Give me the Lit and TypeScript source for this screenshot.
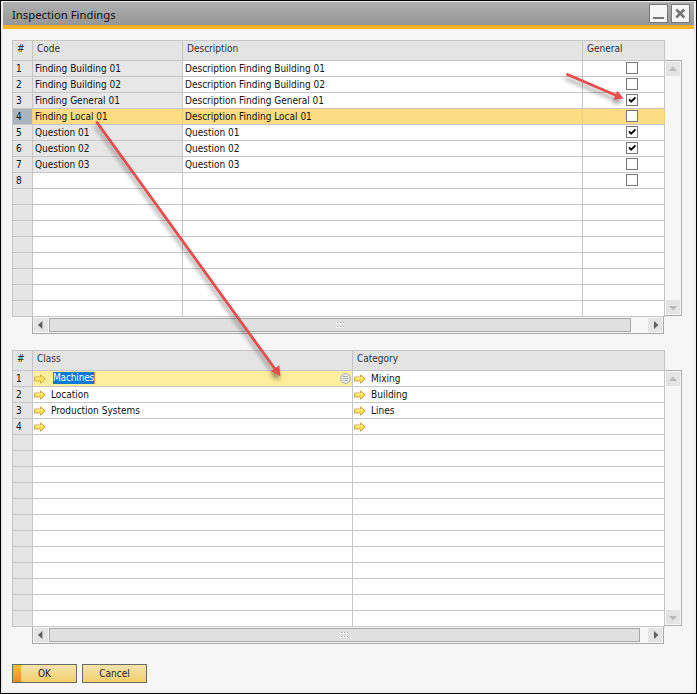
import { LitElement, html, svg, css, nothing } from "lit";
import { customElement, property } from "lit/decorators.js";
import { classMap } from "lit/directives/class-map.js";

interface Finding { code: string; description: string; general?: boolean; }
interface Assignment { cls: string; category: string; }

const FINDINGS: Finding[] = [
  { code: "Finding Building 01", description: "Description Finding Building 01", general: false },
  { code: "Finding Building 02", description: "Description Finding Building 02", general: false },
  { code: "Finding General 01", description: "Description Finding General 01", general: true },
  { code: "Finding Local 01", description: "Description Finding Local 01", general: false },
  { code: "Question 01", description: "Question 01", general: true },
  { code: "Question 02", description: "Question 02", general: true },
  { code: "Question 03", description: "Question 03", general: false },
  { code: "", description: "", general: false },
];
const ASSIGNMENTS: Assignment[] = [
  { cls: "Machines", category: "Mixing" },
  { cls: "Location", category: "Building" },
  { cls: "Production Systems", category: "Lines" },
  { cls: "", category: "" },
];
const ROWS = 16;
const rows = Array.from({ length: ROWS }, (_, i) => i);

@customElement("scroll-bar")
class ScrollBar extends LitElement {
  @property() direction = "vertical";
  static styles = css`
    :host { display: flex; box-sizing: border-box; background: #f7f7f7; }
    :host([direction="vertical"]) {
      flex-direction: column; justify-content: space-between;
      width: 17px; height: 256px; padding: 1px;
      border: 1px solid #adadad; border-left: 0;
    }
    :host([direction="horizontal"]) {
      width: 632px; height: 17px; margin-left: 20px; padding: 1px 1px;
      border: 1px solid #a9a9a9; border-top: 0; align-items: flex-start;
    }
    .btn { width: 14px; height: 14px; flex: none; background: #e4e4e4; }
    .btn svg { display: block; }
    .thumb {
      flex: none; box-sizing: border-box; width: var(--thumb, 582px); height: 14px; margin-left: 1px;
      border: 1px solid #a6a6a6; background: #e0e0e0;
      display: flex; align-items: center; justify-content: center;
    }
    .last { margin-left: auto; }
    .light { fill: #b9b9b9; }
    .dark { fill: #5e5e5e; }
  `;
  render() {
    if (this.direction === "vertical") {
      return html`
        <div class="btn"><svg width="14" height="14"><path class="light" d="M3 9 L7 4.5 L11 9z" /></svg></div>
        <div class="btn"><svg width="14" height="14"><path class="light" d="M3 6 L7 10.5 L11 6z" /></svg></div>`;
    }
    return html`
      <div class="btn"><svg width="14" height="14"><path class="dark" d="M8.4 3 L4 7 L8.4 11z" /></svg></div>
      <div class="thumb">
        <svg width="9" height="6">
          ${[0, 3, 6].map((x) => [0, 4].map((y) => svg`
            <rect x=${x} y=${y} width="2" height="2" fill="#fafafa" />
            <rect x=${x + 1} y=${y} width="1" height="1" fill="#a8a8a8" />`))}
        </svg>
      </div>
      <div class="btn last"><svg width="14" height="14"><path class="dark" d="M6 3 L10.4 7 L6 11z" /></svg></div>`;
  }
}

@customElement("app-root")
class AppRoot extends LitElement {
  static styles = css`
    :host {
      display: block; position: relative; box-sizing: border-box; width: 697px; height: 694px;
      border: 1px solid #000; background: #f6f6f6; overflow: hidden;
      font: 10px/14px "DejaVu Sans Condensed", "DejaVu Sans", sans-serif; font-stretch: condensed;
      color: #111; white-space: nowrap;
    }
    .frame {
      box-sizing: border-box; height: 692px; border: solid #ededed; border-width: 1px 2px 2px 2px;
    }
    .title {
      box-sizing: border-box; height: 27px; padding: 0 4px 0 9px; display: flex; align-items: flex-start;
      background: linear-gradient(#b0b0b0, #969696 23px); border-bottom: 4px solid #f5b324;
    }
    .title h1 {
      margin: 0; flex: 1; font: 11.3px/26px "Noto Sans", sans-serif; color: #111;
    }
    .win { display: flex; gap: 3px; padding-top: 2px; }
    .win svg { display: block; }
    .content { padding: 11px 9px 0; }
    .block { display: flex; align-items: flex-end; width: 670px; }
    .second { margin-top: 16px; }
    .vbar { margin-bottom: 1px; }
    .grid {
      width: 653px; box-sizing: border-box; border: 1px solid #c6c6c6; border-width: 1px 0 0 1px;
    }
    .row { display: grid; height: 16px; background: #fff; }
    .findings .row { grid-template-columns: 20px 150px 400px 82px; }
    .assign .row { grid-template-columns: 20px 320px 312px; }
    .row.head { height: 20px; }
    .cell {
      box-sizing: border-box; border: 1px solid #c6c6c6; border-width: 0 1px 1px 0;
      padding-left: 2px; display: flex; align-items: center; min-width: 0;
    }
    .cell.num { background: #e5e5e5; padding-left: 3px; }
    .head .cell { background: #e4e4e4; padding: 0 0 3px 4px; color: #333; }
    .cell.locked { background: #e7e7e7; }
    .selected .cell { background: #fcdc82; border-right-color: #eccf7f; }
    .selected .cell.num { background: #a9b4bf; }
    .cell.check { padding-left: 43px; }
    .cell.link { padding-left: 1px; gap: 5px; }
    .cell.active { background: #ffee9e; padding-right: 1px; }
    .cell svg { display: block; flex: none; }
    .mark {
      height: 12px; line-height: 12px; margin: -2px auto 0 2px; letter-spacing: -.15px;
      background: #0078d7; color: #fff; border-right: 1px solid #d88b4c;
    }
    .box {
      box-sizing: border-box; width: 12px; height: 12px; flex: none; margin-top: -1px;
      border: 1px solid #777; background: #fff;
    }
    .buttons { display: flex; gap: 5px; margin-top: 20px; }
    .button {
      box-sizing: border-box; width: 65px; height: 19px; margin: 0; padding: 0 0 1px; text-align: center;
      border: 1px solid #6d6a60; background: linear-gradient(#f3e3ae, #f3d069);
      font: inherit; color: #222; line-height: 15px;
    }
    .button.ok { background: linear-gradient(#f6bb42, #ec8f20) 0 0 / 8px 100% no-repeat, linear-gradient(#f3e3ae, #f3d069); }
    .pointers {
      position: absolute; left: -1px; top: -1px; pointer-events: none;
      filter: drop-shadow(-1px 4px 2px rgba(0, 0, 0, 0.4));
    }
  `;

  private link() {
    return html`<svg width="12" height="10" viewBox="0 0 12 10">
      <path d="M.5 3h6V.8L11.3 5 6.5 9.2V7h-6z" fill="#fbe360" stroke="#cfa94a" />
      <path d="M1.5 4h5" stroke="#fff3a0" /></svg>`;
  }

  private box(on: boolean) {
    return html`<div class="box">${on
      ? html`<svg width="10" height="10"><path d="M2 4.3L4.200 6.700 8.400 2.300" fill="none" stroke="#000" stroke-width="1.800" /></svg>`
      : nothing}</div>`;
  }

  render() {
    return html`
      <div class="frame">
        <div class="title">
          <h1>Inspection Findings</h1>
          <div class="win">
            <svg width="19" height="19"><rect x=".5" y=".5" width="18" height="18" fill="#f6f6f6" stroke="#777" /><path d="M4 14h11" stroke="#777" stroke-width="2" /></svg>
            <svg width="19" height="19"><rect x=".5" y=".5" width="18" height="18" fill="#f6f6f6" stroke="#777" /><path d="M5.2 5.500L13.300 13.500M13.300 5.500L5.200 13.500" stroke="#777" stroke-width="2.6" /></svg>
          </div>
        </div>
        <div class="content">
          <div class="block">
            <div class="grid findings">
              <div class="row head">
                <div class="cell">#</div><div class="cell">Code</div><div class="cell">Description</div><div class="cell">General</div>
              </div>
              ${rows.map((i) => {
                const f = FINDINGS[i];
                return html`<div class=${classMap({ row: true, selected: i === 3 })}>
                  <div class="cell num">${f ? i + 1 : ""}</div>
                  <div class=${classMap({ cell: true, locked: !!f?.code })}>${f?.code}</div>
                  <div class="cell">${f?.description}</div>
                  <div class="cell check">${f ? this.box(!!f.general) : nothing}</div>
                </div>`;
              })}
            </div>
            <scroll-bar class="vbar" direction="vertical"></scroll-bar>
          </div>
          <scroll-bar direction="horizontal"></scroll-bar>
          <div class="block second">
            <div class="grid assign">
              <div class="row head">
                <div class="cell">#</div><div class="cell">Class</div><div class="cell">Category</div>
              </div>
              ${rows.map((i) => {
                const a = ASSIGNMENTS[i];
                return html`<div class="row">
                  <div class="cell num">${a ? i + 1 : ""}</div>
                  <div class=${classMap({ cell: true, link: true, active: i === 0 })}>
                    ${a ? this.link() : nothing}${i === 0
                      ? html`<span class="mark">${a.cls}</span><svg width="11" height="11"><circle cx="5.5" cy="5.5" r="4.8" fill="#edf1ee" stroke="#9aa6ad" /><path d="M3 3.5h5M2.5 5.5h6M3 7.5h5" stroke="#9aa6ad" stroke-width=".8" /></svg>`
                      : html`<span>${a?.cls}</span>`}
                  </div>
                  <div class="cell link">${a ? this.link() : nothing}<span>${a?.category}</span></div>
                </div>`;
              })}
            </div>
            <scroll-bar class="vbar" direction="vertical"></scroll-bar>
          </div>
          <scroll-bar style="--thumb:591px" direction="horizontal"></scroll-bar>
          <div class="buttons">
            <button class="button ok">OK</button><button class="button">Cancel</button>
          </div>
        </div>
      </div>
      <svg class="pointers" width="697" height="694">
        <g fill="none" stroke="#ea4c4c" stroke-width="2.8" stroke-linecap="round">
          <path d="M97 122.5L275 369" /><path d="M567.5 74.5L617 95.8" />
        </g>
        <g fill="#ea4c4c"><path d="M280.5 376.5L271 371.300 279.300 365.300z" /><path d="M623.5 98.6L613.500 99.800 617.300 90.700z" /></g>
      </svg>`;
  }
}
